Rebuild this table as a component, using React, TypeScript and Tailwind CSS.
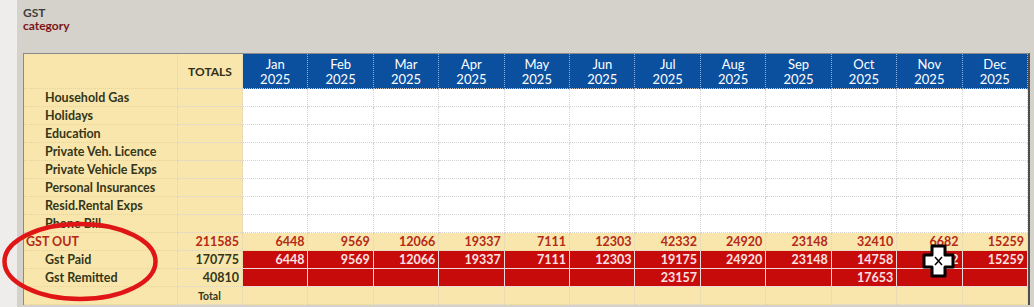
const months = ["Jan", "Feb", "Mar", "Apr", "May", "Jun", "Jul", "Aug", "Sep", "Oct", "Nov", "Dec"];

const categories = [
  "Household Gas",
  "Holidays",
  "Education",
  "Private Veh. Licence",
  "Private Vehicle Exps",
  "Personal Insurances",
  "Resid.Rental Exps",
  "Phone Bill",
];

const gstOut = [6448, 9569, 12066, 19337, 7111, 12303, 42332, 24920, 23148, 32410, 6682, 15259];
const gstPaid = [6448, 9569, 12066, 19337, 7111, 12303, 19175, 24920, 23148, 14758, 6682, 15259];
const gstRemitted: (number | null)[] = [null, null, null, null, null, null, 23157, null, null, 17653, null, null];

const tan = "h-[18px] border-r border-b border-dotted border-[#ddd3bb] bg-[#f9e6ac]";
const white = "h-[18px] border-r border-b border-dotted border-[#d2d2d2] bg-white";
const red = "h-[18px] border-r border-b border-solid border-[#f1d9d9] bg-[#c70b0b]";

function Num({ v, className }: { v: number | null; className: string }) {
  return (
    <div className={`flex items-center justify-end pt-[2px] pr-[3px] text-[12.5px] font-bold ${className}`}>
      {v ?? ""}
    </div>
  );
}

function Label({ text, className }: { text: string; className: string }) {
  return (
    <div className={`${tan} flex items-center pt-[2px] text-[12.5px] font-bold ${className}`}>{text}</div>
  );
}

export default function App() {
  return (
    <div className="flex h-[307px] w-[1034px] overflow-hidden bg-[#d5d1cb] font-['Lato','Open_Sans',sans-serif]">
      <div className="w-[17px] shrink-0 bg-[#efedeb]" />
      <div className="relative flex flex-1 flex-col pl-[6px]">
        <div className="pt-[6px] text-[12px] font-bold leading-[13px]">
          <p className="text-[#3d3d3d]">GST</p>
          <p className="text-[#7c1414]">category</p>
        </div>

        <div className="mt-[21px] w-[1007px] border-t border-l border-r-2 border-t-[#8a8a8a] border-l-[#8a8a8a] border-r-[#4e4e4e]">
          <div className="grid grid-cols-[154px_65px_repeat(12,minmax(0,1fr))]">
            {/* header */}
            <div className="h-[35px] border-r border-b border-dotted border-[#ddd3bb] bg-[#f9e6ac]" />
            <div className="flex h-[35px] items-center justify-center border-r border-b border-dotted border-[#ddd3bb] bg-[#f9e6ac] pt-[2px] text-[12px] font-bold text-[#2f2f1a]">
              TOTALS
            </div>
            {months.map((m) => (
              <div
                key={m}
                className="flex h-[35px] flex-col items-center justify-center border-r border-b border-dotted border-r-[#8fb2dd] border-b-[#c9c9c9] bg-[#0b4f9f] pt-[2px] text-[13px] leading-[15px] text-white"
              >
                <span>{m}</span>
                <span>2025</span>
              </div>
            ))}

            {/* categories */}
            {categories.map((c) => (
              <div key={c} className="contents">
                <Label text={c} className="pl-[21px] text-[#34361a]" />
                <div className={tan} />
                {months.map((m) => (
                  <div key={m} className={white} />
                ))}
              </div>
            ))}

            {/* GST OUT */}
            <Label text="GST OUT" className="pl-[2px] text-[#b42a16]" />
            <Num v={211585} className={`${tan} text-[#b42a16]`} />
            {gstOut.map((v, i) => (
              <Num key={i} v={v} className={`${tan} text-[#b42a16]`} />
            ))}

            {/* Gst Paid */}
            <Label text="Gst Paid" className="pl-[21px] text-[#34361a]" />
            <Num v={170775} className={`${tan} text-[#34361a]`} />
            {gstPaid.map((v, i) => (
              <Num key={i} v={v} className={`${red} text-[#fbe2e2]`} />
            ))}

            {/* Gst Remitted */}
            <Label text="Gst Remitted" className="pl-[21px] text-[#34361a]" />
            <Num v={40810} className={`${tan} text-[#34361a]`} />
            {gstRemitted.map((v, i) => (
              <Num key={i} v={v} className={`${red} text-[#fbe2e2]`} />
            ))}

            {/* Total */}
            <div className={tan} />
            <div className={`${tan} flex items-center pt-[2px] pl-[20px] text-[10.5px] font-bold text-[#34361a]`}>Total</div>
            {months.map((m) => (
              <div key={m} className={tan} />
            ))}
          </div>
        </div>
      </div>

      {/* annotation ellipse */}
      <svg className="pointer-events-none absolute left-0 top-[215px]" width="170" height="92" viewBox="0 0 170 92">
        <ellipse cx="80" cy="46.5" rx="75.5" ry="37.5" fill="none" stroke="#e01515" strokeWidth="4.5" />
      </svg>

      {/* cell cursor */}
      <svg className="pointer-events-none absolute left-[922px] top-[243px]" width="34" height="36" viewBox="0 0 34 36">
        <path
          d="M10 3 H23 V12 H31 V24 H23 V33 H10 V24 H2 V12 H10 Z"
          fill="#fff"
          stroke="#000"
          strokeWidth="3"
          strokeLinejoin="round"
        />
        <path d="M13 14 L20 22 M20 14 L13 22" stroke="#000" strokeWidth="1.5" />
      </svg>
    </div>
  );
}
